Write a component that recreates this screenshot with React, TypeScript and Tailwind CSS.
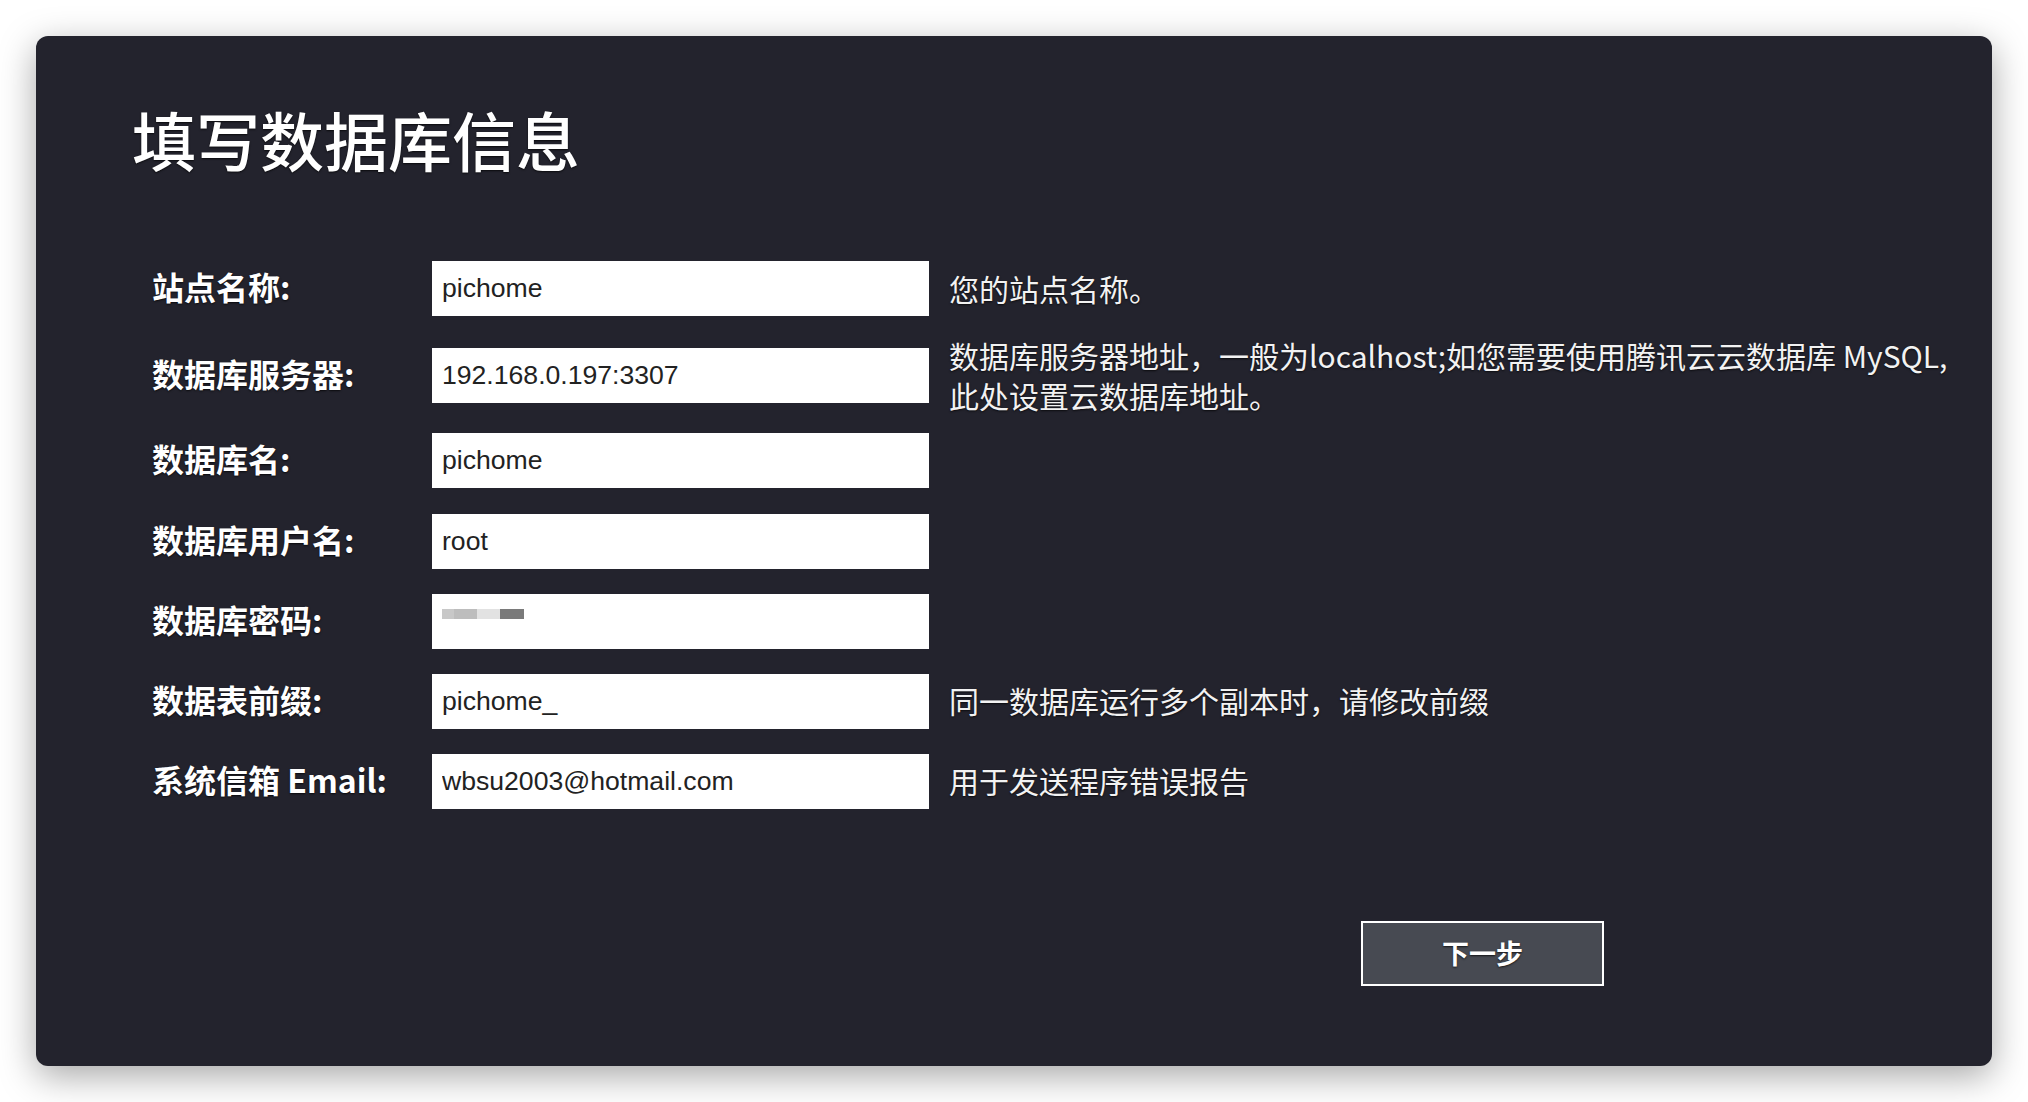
import React from "react";

interface Field {
  label: string;
  value?: string;
  desc?: React.ReactNode;
  rowClass: string;
  secret?: boolean;
}

const fields: Field[] = [
  { label: "站点名称:", value: "pichome", desc: "您的站点名称。", rowClass: "h-[87px]" },
  {
    label: "数据库服务器:",
    value: "192.168.0.197:3307",
    desc: (
      <>
        数据库服务器地址，一般为localhost;如您需要使用腾讯云云数据库 MySQL,
        <br />
        此处设置云数据库地址。
      </>
    ),
    rowClass: "h-[87px]",
  },
  { label: "数据库名:", value: "pichome", rowClass: "h-[83px]" },
  { label: "数据库用户名:", value: "root", rowClass: "h-[79px]" },
  { label: "数据库密码:", secret: true, rowClass: "h-[80px]" },
  {
    label: "数据表前缀:",
    value: "pichome_",
    desc: "同一数据库运行多个副本时，请修改前缀",
    rowClass: "h-[80px]",
  },
  {
    label: "系统信箱 Email:",
    value: "wbsu2003@hotmail.com",
    desc: "用于发送程序错误报告",
    rowClass: "h-[80px]",
  },
];

const cjk = "font-['Noto_Sans_CJK_SC',sans-serif]";
const shadow = "[text-shadow:0_1px_2px_rgba(0,0,0,0.7)]";

const App: React.FC = () => {
  return (
    <div className="min-h-screen bg-white p-[36px]">
      <div
        className={`w-[1956px] h-[1030px] rounded-[12px] bg-[#23232d] shadow-[0_10px_36px_rgba(0,0,0,0.35)] flex flex-col ${cjk}`}
      >
        <h1
          className={`pl-[96px] pt-[64px] text-[64px] leading-[77px] font-medium text-white ${shadow}`}
        >
          填写数据库信息
        </h1>

        <div className="mt-[68px] pl-[116px] flex flex-col">
          {fields.map((f) => (
            <div key={f.label} className={`flex items-center ${f.rowClass}`}>
              <div
                className={`w-[280px] pb-[5px] text-[32px] font-bold text-white ${shadow}`}
              >
                {f.label}
              </div>
              {f.secret ? (
                <div className="w-[497px] h-[55px] bg-white pl-[10px] pt-[15px] flex items-start">
                  <span className="w-[12px] h-[10px] bg-[#c8c8c8]" />
                  <span className="w-[23px] h-[10px] bg-[#bdbdbd]" />
                  <span className="w-[23px] h-[10px] bg-[#e2e2e2]" />
                  <span className="w-[24px] h-[10px] bg-[#7a7a7a]" />
                </div>
              ) : (
                <input
                  readOnly
                  value={f.value}
                  className="w-[497px] h-[55px] bg-white px-[10px] text-[26.6px] text-[#222] font-['Liberation_Sans',Arial,sans-serif] outline-none"
                />
              )}
              {f.desc && (
                <div
                  className={`ml-[20px] w-[1036px] pb-[2px] text-[30px] leading-[40px] text-[#f2f2f2] ${shadow}`}
                >
                  {f.desc}
                </div>
              )}
            </div>
          ))}
        </div>

        <div className="mt-[100px] pl-[1325px]">
          <button
            className={`w-[243px] h-[65px] border-2 border-white bg-[#474a52] text-white text-[27px] font-bold ${shadow}`}
          >
            下一步
          </button>
        </div>
      </div>
    </div>
  );
};

export default App;
